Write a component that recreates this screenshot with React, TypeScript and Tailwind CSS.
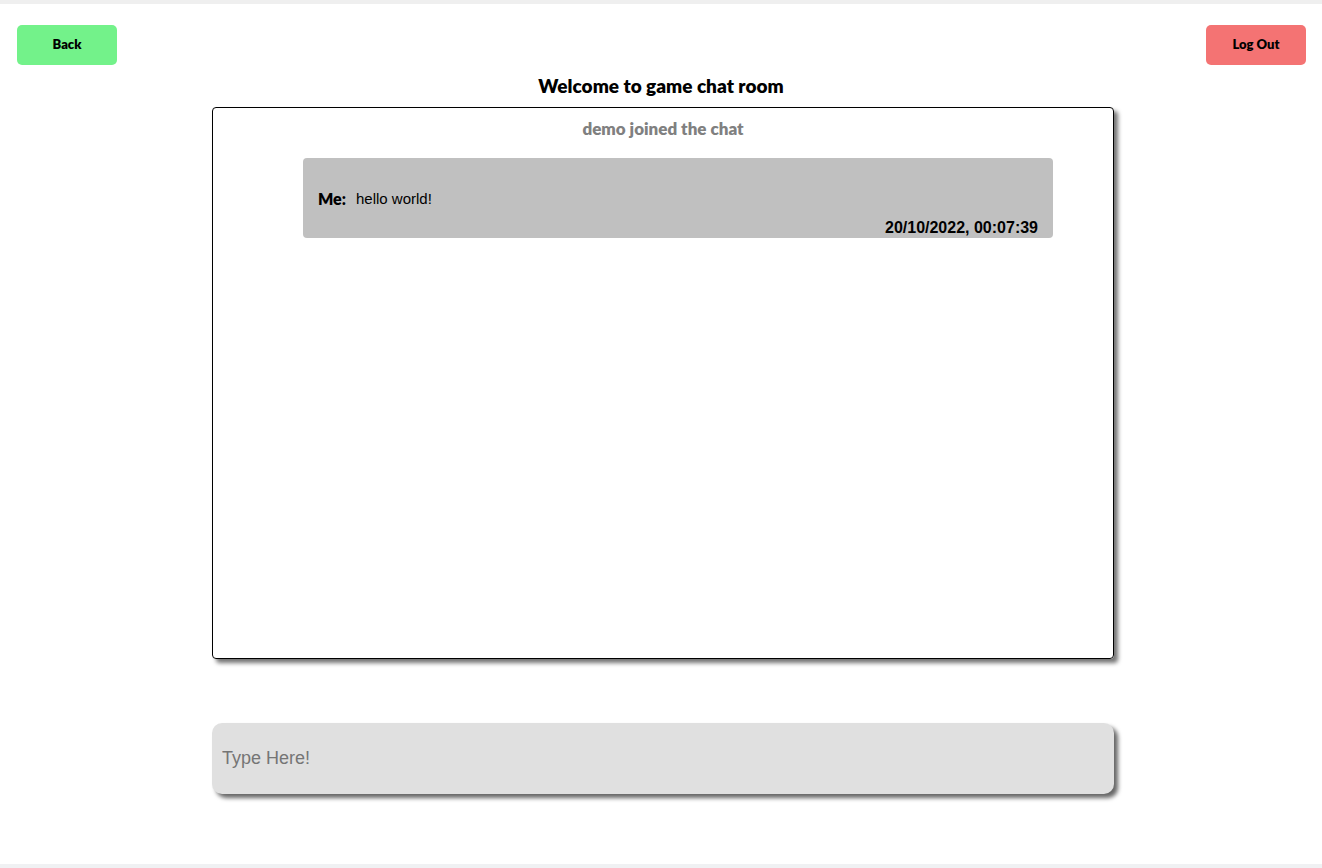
export default function App() {
  return (
    <div className="flex min-h-[868px] flex-col bg-white font-['Lato',sans-serif]">
      <div className="h-[4px] bg-[#efefef]" />

      <div className="flex items-start justify-between pl-[17px] pr-[16px] pt-[21px]">
        <button
          type="button"
          className="h-[40px] w-[100px] rounded-[5px] bg-[#73f28a] text-[13px] font-extrabold text-black"
        >
          Back
        </button>
        <button
          type="button"
          className="h-[40px] w-[100px] rounded-[5px] bg-[#f47373] text-[13px] font-extrabold text-black"
        >
          Log Out
        </button>
      </div>

      <h1 className="mt-[9px] text-center text-[19px] font-extrabold leading-[24px] text-black">
        Welcome to game chat room
      </h1>

      <div className="mx-auto mt-[9px] flex h-[552px] w-[902px] translate-x-[2px] flex-col items-center rounded-[4px] border border-black shadow-[4px_4px_4px_rgba(0,0,0,0.55)]">
        <p className="mt-[10px] text-[17px] font-extrabold leading-[22px] text-[#808080]">
          demo joined the chat
        </p>
        <div className="mr-[60px] mt-[18px] flex h-[80px] w-[750px] flex-col self-end rounded-[4px] bg-[#c0c0c0] px-[15px]">
          <div className="mt-[32px] flex items-center text-[16px] leading-[18px]">
            <span className="font-extrabold text-black">Me:</span>
            <span className="ml-[10px] font-['Liberation_Sans',sans-serif] text-[15px] text-black">hello world!</span>
          </div>
          <p className="mt-[12px] text-right font-['Liberation_Sans',sans-serif] text-[16px] font-bold leading-[16px] text-black">
            20/10/2022, 00:07:39
          </p>
        </div>
      </div>

      <div className="mx-auto mt-[64px] w-[902px] translate-x-[2px]">
        <input
          type="text"
          placeholder="Type Here!"
          className="h-[71px] w-full rounded-[10px] bg-[#e0e0e0] px-[10px] font-['Liberation_Sans',sans-serif] text-[18px] text-black shadow-[4px_4px_4px_rgba(0,0,0,0.6)] outline-none placeholder:text-[#757575]"
        />
      </div>

      <div className="flex-1" />
      <div className="h-[4px] bg-[#f0f1f3]" />
    </div>
  );
}
